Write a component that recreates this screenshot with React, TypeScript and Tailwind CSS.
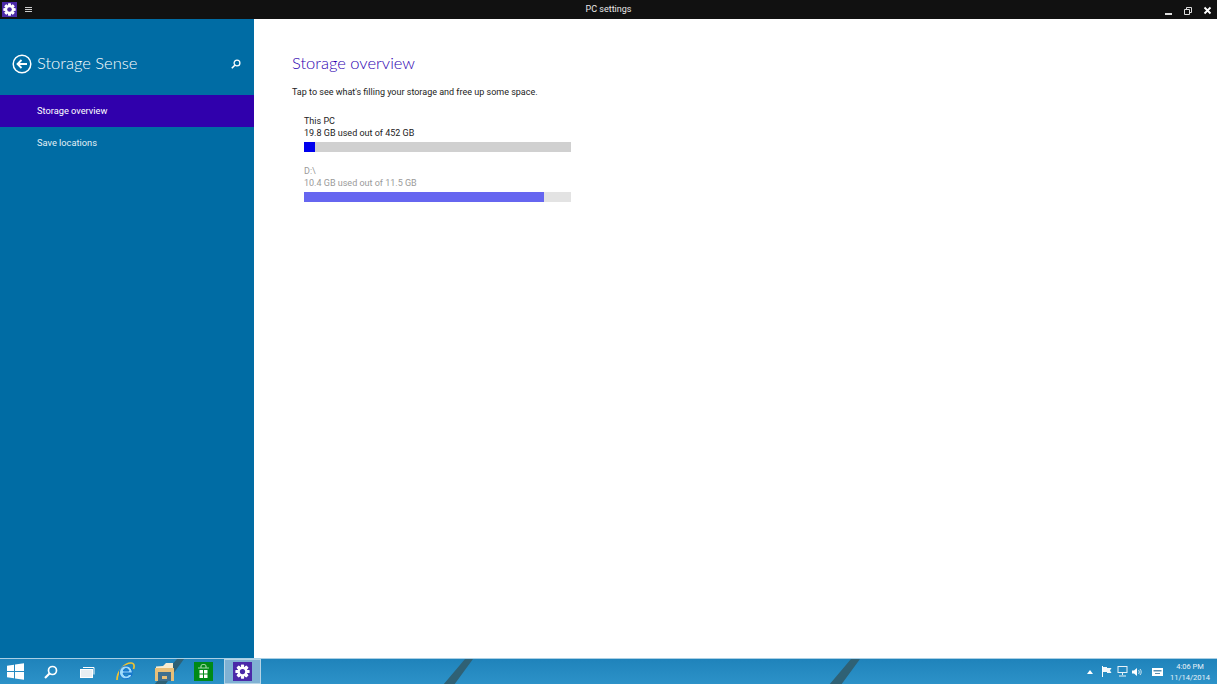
const font = { fontFamily: 'Roboto, "Open Sans", sans-serif' };

function Gear({ size = 14 }: { size?: number }) {
  const teeth = [0, 45, 90, 135, 180, 225, 270, 315];
  return (
    <svg width={size} height={size} viewBox="0 0 24 24">
      {teeth.map((a) => (
        <rect key={a} x="9.5" y="1" width="5" height="22" rx="0.6" fill="#fff" transform={`rotate(${a} 12 12)`} />
      ))}
      <circle cx="12" cy="12" r="8.2" fill="#fff" />
      <circle cx="12" cy="12" r="4.2" fill="#4b2aa8" />
    </svg>
  );
}

function TitleBar() {
  return (
    <div className="grid h-[19px] shrink-0 grid-cols-[1fr_auto_1fr] items-center bg-[#111111] text-white">
      <div className="flex items-center">
        <div className="ml-[2px] flex h-[15px] w-[15px] items-center justify-center bg-[#4b2aa8]">
          <Gear size={13} />
        </div>
        <div className="ml-[8px] flex w-[7px] flex-col gap-[1px]">
          <div className="h-[1px] bg-[#cccccc]" />
          <div className="h-[1px] bg-[#cccccc]" />
          <div className="h-[1px] bg-[#cccccc]" />
        </div>
      </div>
      <div className="text-[9px] text-[#e8e8e8]">PC settings</div>
      <div className="flex justify-end">
        <svg width="56" height="12" viewBox="0 0 56 12" className="mr-[5px]">
          <rect x="9" y="9" width="7" height="2" fill="#ddd" />
          <path d="M28.5 5.5h5v5h-5zM30.5 5.5v-2h5v5h-2" fill="none" stroke="#ddd" strokeWidth="1" />
          <path d="M48.5 3.5l6 6M54.5 3.5l-6 6" stroke="#fff" strokeWidth="1.8" />
        </svg>
      </div>
    </div>
  );
}

function Sidebar() {
  return (
    <aside className="flex w-[254px] shrink-0 flex-col bg-[#006ca4] text-white">
      <div className="flex h-[76px] items-start pt-[33px]">
        <svg width="20" height="20" viewBox="0 0 20 20" className="ml-[12px] mt-[2px]">
          <circle cx="10" cy="10" r="8.8" fill="none" stroke="#fff" strokeWidth="1.5" />
          <path d="M15 10H6M9.5 6L5.5 10l4 4" fill="none" stroke="#fff" strokeWidth="1.8" />
        </svg>
        <div className="ml-[5px] font-['Lato'] text-[16.5px] leading-[23px] font-light">Storage Sense</div>
        <svg width="10" height="10" viewBox="0 0 10 10" className="ml-auto mr-[13px] mt-[7px]">
          <circle cx="6" cy="4" r="2.9" fill="none" stroke="#fff" strokeWidth="1.3" />
          <path d="M3.8 6.2L.8 9.2" stroke="#fff" strokeWidth="1.6" />
        </svg>
      </div>
      <div className="flex h-[32px] items-center bg-[#3000ac] pl-[37px] text-[9.25px]">Storage overview</div>
      <div className="flex h-[32px] items-center pl-[37px] text-[9.25px] text-[#e4f0f6]">Save locations</div>
    </aside>
  );
}

function Drive({ name, used, percent, dim }: { name: string; used: string; percent: number; dim?: boolean }) {
  return (
    <div className={dim ? 'text-[#9a9a9a]' : 'text-[#222222]'}>
      <div className="text-[9px] leading-[12px]">{name}</div>
      <div className="text-[9px] leading-[12px]">{used}</div>
      <div className={`mt-[3px] h-[10px] w-[267px] ${dim ? 'bg-[#e3e3e3]' : 'bg-[#d0d0d0]'}`}>
        <div className={`h-full ${dim ? 'bg-[#6666f0]' : 'bg-[#0000ee]'}`} style={{ width: `${percent}%` }} />
      </div>
    </div>
  );
}

function Main() {
  return (
    <main className="flex-1 bg-white pl-[38px] pt-[33px]">
      <h1 className="font-['Lato'] text-[16.5px] leading-[23px] font-light text-[#2c00b0]">Storage overview</h1>
      <p className="mt-[10px] text-[9px] leading-[14px] text-[#222222]">
        Tap to see what's filling your storage and free up some space.
      </p>
      <div className="ml-[12px] mt-[16px] flex flex-col gap-[13px]">
        <Drive name="This PC" used="19.8 GB used out of 452 GB" percent={4} />
        <Drive name="D:\" used="10.4 GB used out of 11.5 GB" percent={90} dim />
      </div>
    </main>
  );
}

function Taskbar() {
  return (
    <footer className="relative flex h-[26px] shrink-0 items-center overflow-hidden border-t border-[#a9cfe4] bg-gradient-to-b from-[#1f83bb] to-[#2c92c8] text-white">
      {/* wallpaper streaks showing through the bar */}
      <svg className="absolute left-0 top-0" width="1217" height="26" viewBox="0 0 1217 26">
        <path d="M177 0h7l-19 26h-11zM465 0h8l-19 26h-11zM851 0h9l-19 26h-12z" fill="#2f6175" />
      </svg>
      <div className="relative flex h-full items-center">
        <svg width="17" height="17" viewBox="0 0 17 17" className="ml-[7px]">
          <path d="M0 2.8l7-1v6.3H0zM8 1.6L17 .3v7.8H8zM0 9h7v6.2l-7-1zM8 9h9v7.7l-9-1.3z" fill="#fff" />
        </svg>
        <svg width="14" height="14" viewBox="0 0 14 14" className="ml-[20px]">
          <circle cx="8.5" cy="5.5" r="4" fill="none" stroke="#fff" strokeWidth="1.7" />
          <path d="M5.5 8.5L1 13" stroke="#fff" strokeWidth="2.2" />
        </svg>
        <svg width="15" height="12" viewBox="0 0 15 12" className="ml-[22px]">
          <path d="M3 1.5h11v7" fill="none" stroke="#fff" strokeWidth="1" />
          <rect x="0.5" y="3.5" width="12" height="8" fill="#e8eef2" stroke="#fff" />
        </svg>
        <svg width="19" height="19" viewBox="0 0 19 19" className="ml-[21px]">
          <path d="M1 18C1 10 8 1 15 1c3.5 0 3.5 3.5 2.5 6" fill="none" stroke="#f2c230" strokeWidth="1.7" />
          <path
            d="M3.5 10.5C3.5 6.5 6.5 4 10 4s6.3 2.7 6.3 7H7.2c.2 2 1.5 3 3 3 1.2 0 2.2-.6 2.7-1.6h3.2C15.2 15 13 16.8 10 16.8c-3.8 0-6.5-2.6-6.5-6.3zM7.3 9h5.6c-.2-1.4-1.3-2.4-2.8-2.4S7.6 7.6 7.3 9z"
            fill="#9fdcfb"
            stroke="#0f6fd0"
            strokeWidth="1"
          />
        </svg>
        <svg width="19" height="18" viewBox="0 0 19 18" className="ml-[20px]">
          <path d="M1 5V3.5l7-.5 3-3h7v5z" fill="#f8ecd0" />
          <rect x="0" y="5" width="19" height="13" fill="#e8bf78" />
          <rect x="3" y="9" width="13" height="9" fill="#3f6f8f" />
          <rect x="7" y="13" width="5" height="3" fill="#e8bf78" />
        </svg>
        <div className="ml-[20px] flex h-[19px] w-[19px] items-center justify-center bg-[#008a17]">
          <svg width="13" height="15" viewBox="0 0 13 15">
            <path d="M4 4V2C4 1 5 .5 6.5 .5S9 1 9 2v2" fill="none" stroke="#d8f0dc" strokeWidth="0.9" />
            <path d="M1 3.5h11v1H1z" fill="#9fd8aa" />
            <path d="M2.5 6h3.5v3.5H2.5zM7 6h3.5v3.5H7zM2.5 10.5h3.5V14H2.5zM7 10.5h3.5V14H7z" fill="#fff" />
          </svg>
        </div>
        <div className="ml-[11px] flex h-[25px] w-[37px] items-center justify-center border border-[#b5d4e6] bg-[#7fb1d3]">
          <div className="flex h-[19px] w-[19px] items-center justify-center bg-[#4b2aa8]">
            <Gear size={15} />
          </div>
        </div>
      </div>
      <div className="relative ml-auto flex h-full items-center">
        <svg width="6" height="4" viewBox="0 0 6 4" className="mr-[9px]">
          <path d="M0 4l3-4 3 4z" fill="#fff" />
        </svg>
        <svg width="10" height="11" viewBox="0 0 10 11" className="mr-[5px]">
          <path d="M.5 0v11" stroke="#fff" />
          <path d="M1 1h4v1h4.5L8 4.5 9.5 7H5V6H1z" fill="#f2f7fa" />
        </svg>
        <svg width="11" height="11" viewBox="0 0 11 11" className="mr-[4px]">
          <rect x="1" y="0.5" width="9" height="6" fill="none" stroke="#e8f2f8" />
          <path d="M5.5 7v2M2 10h7" stroke="#e8f2f8" />
        </svg>
        <svg width="10" height="10" viewBox="0 0 10 10" className="mr-[10px]">
          <path d="M0 3.5h2L5 1v8L2 6.5H0z" fill="#fff" />
          <path d="M6.5 3c1 1 1 3 0 4M8 2c1.6 1.6 1.6 4.4 0 6" fill="none" stroke="#fff" strokeWidth="0.8" />
        </svg>
        <svg width="11" height="8" viewBox="0 0 11 8" className="mr-[7px]">
          <rect width="11" height="8" fill="#fff" />
          <rect x="1.5" y="2" width="8" height="1.5" fill="#5a8fb0" />
          <rect x="3" y="5" width="5" height="1" fill="#5a8fb0" />
        </svg>
        <div className="mr-[7px] flex w-[40px] flex-col items-center text-[7.5px] leading-[11px] text-[#e8f2f8]">
          <span>4:06 PM</span>
          <span>11/14/2014</span>
        </div>
      </div>
    </footer>
  );
}

export default function App() {
  return (
    <div className="flex h-[684px] w-[1217px] flex-col overflow-hidden" style={font}>
      <TitleBar />
      <div className="flex min-h-0 flex-1">
        <Sidebar />
        <Main />
      </div>
      <Taskbar />
    </div>
  );
}
